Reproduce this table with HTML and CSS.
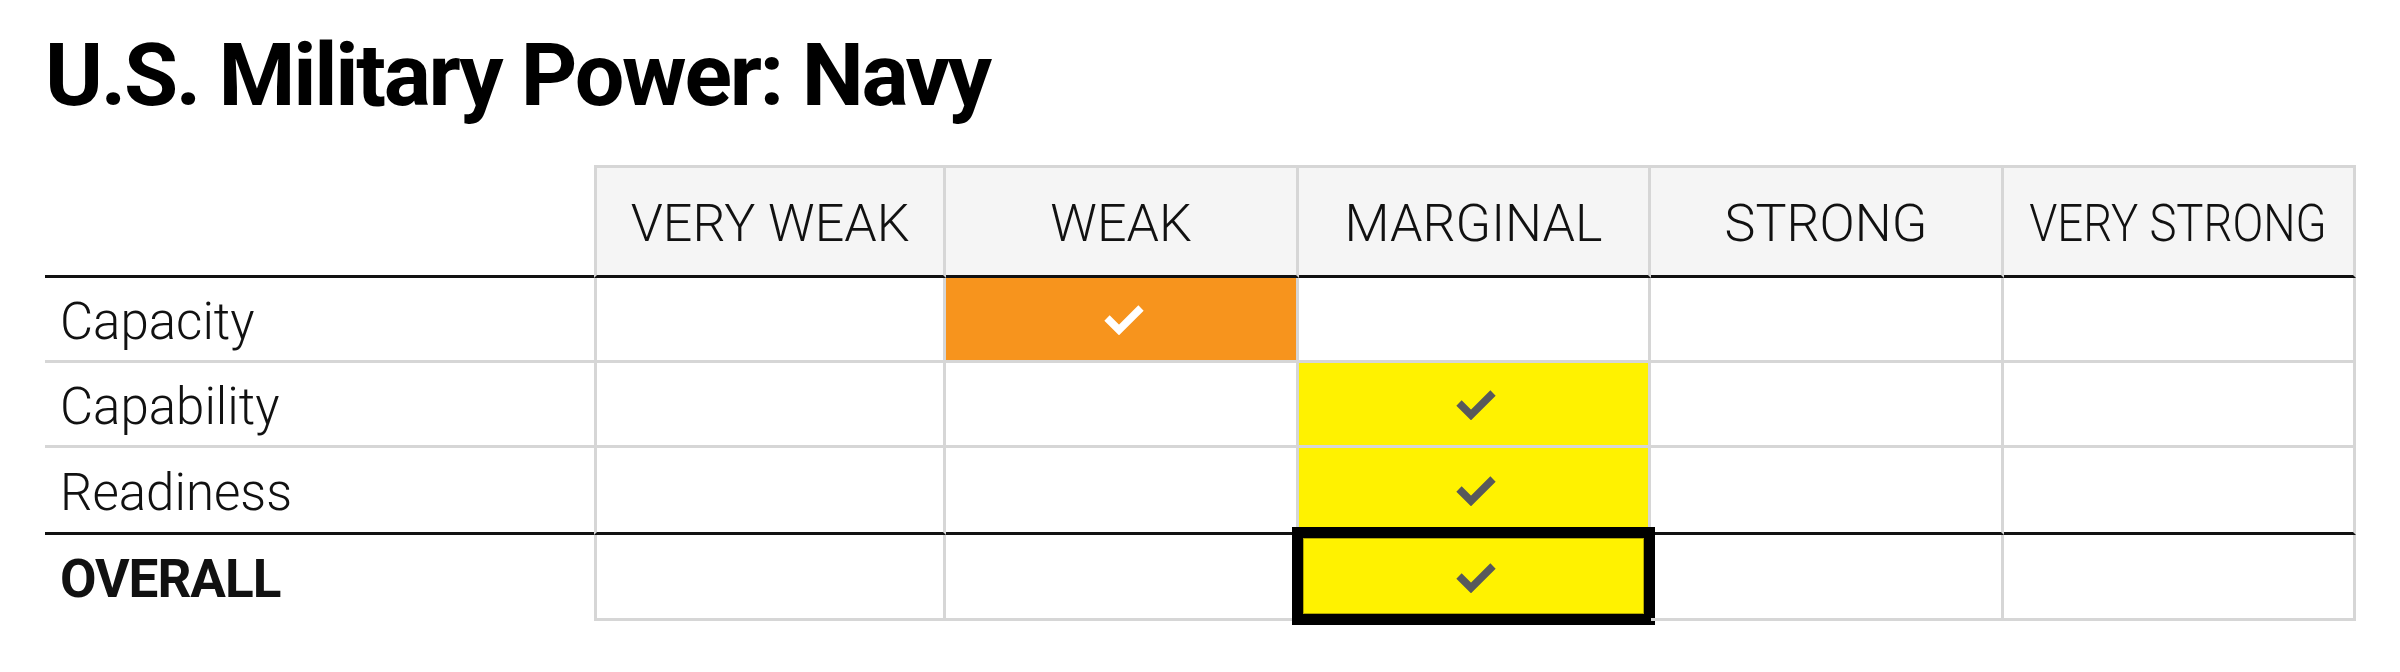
FILE: index.html
```html
<!DOCTYPE html>
<html lang="en">
<head>
<meta charset="utf-8">
<title>U.S. Military Power: Navy</title>
<link rel="stylesheet" href="styles.css">
</head>
<body>
<div class="page">
  <h1 class="title">U.S. Military Power: Navy</h1>
  <div class="grid">
    <div class="corner"></div>
    <div class="hd first">VERY WEAK</div>
    <div class="hd">WEAK</div>
    <div class="hd">MARGINAL</div>
    <div class="hd">STRONG</div>
    <div class="hd"><span class="squeeze">VERY STRONG</span></div>

    <div class="label">Capacity</div>
    <div class="cell first"></div>
    <div class="cell weak"><svg class="check light" viewBox="0 0 40 32"><polyline points="3,15 15,27 37,5"/></svg></div>
    <div class="cell"></div>
    <div class="cell"></div>
    <div class="cell"></div>

    <div class="label">Capability</div>
    <div class="cell first"></div>
    <div class="cell"></div>
    <div class="cell marginal"><svg class="check" viewBox="0 0 40 32"><polyline points="3,15 15,27 37,5"/></svg></div>
    <div class="cell"></div>
    <div class="cell"></div>

    <div class="label last">Readiness</div>
    <div class="cell first last"></div>
    <div class="cell last"></div>
    <div class="cell marginal last"><svg class="check" viewBox="0 0 40 32"><polyline points="3,15 15,27 37,5"/></svg></div>
    <div class="cell last"></div>
    <div class="cell last"></div>

    <div class="label overall">OVERALL</div>
    <div class="cell first"></div>
    <div class="cell"></div>
    <div class="cell marginal picked"><span class="frame"></span><svg class="check" viewBox="0 0 40 32"><polyline points="3,15 15,27 37,5"/></svg></div>
    <div class="cell"></div>
    <div class="cell"></div>
  </div>
</div>
</body>
</html>
```

FILE: styles.css
```css
* { box-sizing: border-box; }

html, body {
  margin: 0;
  padding: 0;
  background: #ffffff;
}

body {
  width: 2400px;
  height: 672px;
  overflow: hidden;
  font-family: Roboto, "Liberation Sans", Arial, sans-serif;
  color: #000;
}

.page {
  padding: 31px 44px 0 45px;
}

.title {
  margin: 0 0 46px 0;
  font-family: Roboto, "Liberation Sans", sans-serif;
  font-weight: 700;
  font-size: 88px;
  line-height: 88px;
  letter-spacing: -2.3px;
  color: #000;
}

.grid {
  display: grid;
  grid-template-columns: 549px repeat(5, 1fr);
  grid-template-rows: 113px 85px 85px 87px 86px;
}

.corner {
  border-bottom: 3px solid #111;
}

.hd {
  display: flex;
  align-items: center;
  justify-content: center;
  background: #f5f5f5;
  border-top: 3px solid #d6d6d6;
  border-right: 3px solid #d6d6d6;
  border-bottom: 3px solid #111;
  font-weight: 300;
  font-size: 52px;
  color: #111;
  padding-top: 4px;
  white-space: nowrap;
}

.hd.first { border-left: 3px solid #d6d6d6; }

.squeeze {
  display: inline-block;
  transform: scaleX(0.875);
}

.label {
  display: flex;
  align-items: center;
  padding-left: 15px;
  padding-top: 5px;
  font-weight: 300;
  font-size: 51px;
  color: #111;
  border-bottom: 3px solid #d6d6d6;
}

.label.last { border-bottom-color: #111; }

.label.overall {
  border-bottom: none;
  font-weight: 700;
  font-size: 53px;
  letter-spacing: -1px;
  padding-top: 2px;
}

.cell {
  position: relative;
  display: flex;
  align-items: center;
  justify-content: center;
  border-right: 3px solid #d6d6d6;
  border-bottom: 3px solid #d6d6d6;
}

.cell.first { border-left: 3px solid #d6d6d6; }
.cell.last { border-bottom-color: #111; }

.cell.weak { background: #f7941d; }
.cell.marginal { background: #fff200; }

.check {
  width: 40px;
  height: 32px;
  margin-left: 5px;
  fill: none;
  stroke: #58595b;
  stroke-width: 7.5;
  stroke-linecap: butt;
  stroke-linejoin: miter;
  position: relative;
}

.check.light { stroke: #ffffff; }

.frame {
  position: absolute;
  top: -8px;
  bottom: -7px;
  left: -7px;
  right: -7px;
  border: 11px solid #000;
  box-shadow: inset 0 0 0 1px #b3a700;
}
```
